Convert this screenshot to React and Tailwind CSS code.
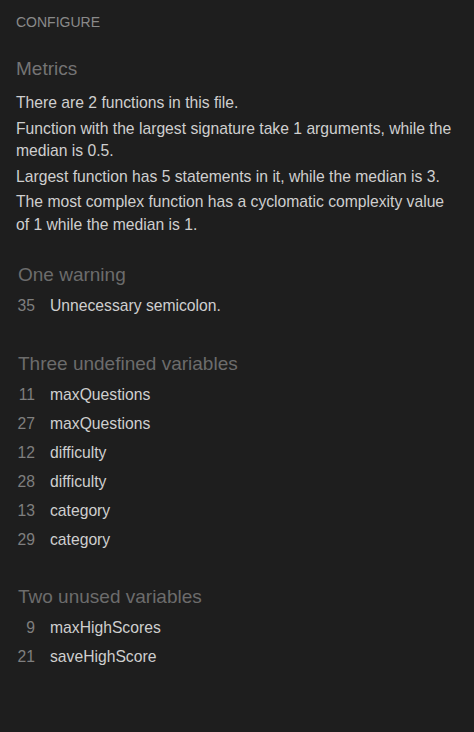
const undefinedVars = [
  { line: 11, name: "maxQuestions" },
  { line: 27, name: "maxQuestions" },
  { line: 12, name: "difficulty" },
  { line: 28, name: "difficulty" },
  { line: 13, name: "category" },
  { line: 29, name: "category" },
]

const unusedVars = [
  { line: 9, name: "maxHighScores" },
  { line: 21, name: "saveHighScore" },
]

const Row = ({ line, name }) => (
  <div className="flex items-center h-[29px]">
    <span className="w-[19px] text-right text-[#7f7f7f]">{line}</span>
    <span className="ml-[15px] text-[#cfcfcf]">{name}</span>
  </div>
)

const Heading = ({ children }) => (
  <h3 className="text-[19px] leading-[24px] text-[#6c6c6c] pl-[2px]">{children}</h3>
)

export default function App() {
  return (
    <div
      className="w-[474px] h-[732px] bg-[#1e1e1e] pl-[16px] pr-[18px] pt-[14px] text-[15.7px]"
      style={{ fontFamily: '"Liberation Sans", Arial, sans-serif' }}
    >
      <div className="text-[14px] leading-[17px] text-[#8a8a8a]">CONFIGURE</div>

      <h2 className="mt-[26px] text-[19px] leading-[24px] text-[#747474]">Metrics</h2>
      <div className="mt-[11px] text-[#cfcfcf] leading-[22.5px] flex flex-col gap-[3px]">
        <p>There are 2 functions in this file.</p>
        <p>Function with the largest signature take 1 arguments, while the median is 0.5.</p>
        <p>Largest function has 5 statements in it, while the median is 3.</p>
        <p>The most complex function has a cyclomatic complexity value of 1 while the median is 1.</p>
      </div>

      <div className="mt-[27px]">
        <Heading>One warning</Heading>
        <div className="mt-[4.5px]">
          <Row line={35} name="Unnecessary semicolon." />
        </div>
      </div>

      <div className="mt-[31px]">
        <Heading>Three undefined variables</Heading>
        <div className="mt-[5px]">
          {undefinedVars.map((v, i) => (
            <Row key={i} line={v.line} name={v.name} />
          ))}
        </div>
      </div>

      <div className="mt-[30px]">
        <Heading>Two unused variables</Heading>
        <div className="mt-[5px]">
          {unusedVars.map((v, i) => (
            <Row key={i} line={v.line} name={v.name} />
          ))}
        </div>
      </div>
    </div>
  )
}
